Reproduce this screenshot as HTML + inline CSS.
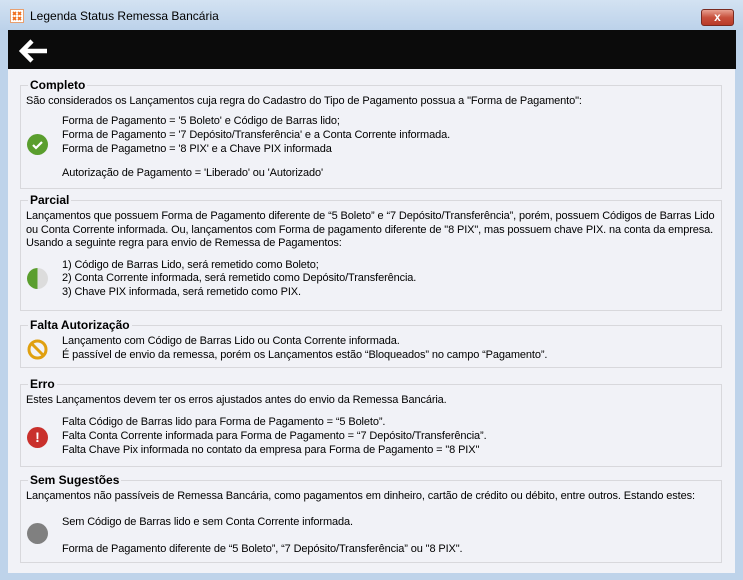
<!DOCTYPE html>
<html><head><meta charset="utf-8"><style>
*{margin:0;padding:0;box-sizing:border-box}
body{width:743px;height:580px;overflow:hidden;background:#bed3ea;font-family:"Liberation Sans",Arial,sans-serif;font-size:11px;color:#000;position:relative}
.t{position:absolute;white-space:nowrap;line-height:14px;font-size:11px;letter-spacing:-0.12px}
.content{position:absolute;left:8px;top:30px;width:727px;height:543px;background:#f1f2f7}
.bar{position:absolute;left:8px;top:30px;width:728px;height:39px;background:#0b0b0b}
.box{position:absolute;left:20px;width:702px;border:1px solid #d8d8dc}
.lg{position:absolute;left:28px;font-weight:bold;background:#f1f2f7;padding:0 2px;line-height:14px;font-size:12px}
.ic{position:absolute;left:27px;width:21px;height:21px;border-radius:50%}
</style></head><body>
<div style="position:absolute;left:0;top:0;width:743px;height:30px;background:linear-gradient(#d3e2f2,#bcd2ea)"></div>
<div style="position:absolute;left:10px;top:9px;width:14px;height:14px;background:#fff;border:1px solid #e8a070"><svg width="12" height="12" viewBox="0 0 12 12"><path d="M2 2l3 3M5 2l-3 3M7 2l3 3M10 2l-3 3M2 7l3 3M5 7l-3 3M7 7l3 3M10 7l-3 3" stroke="#f07020" stroke-width="1.6"/></svg></div>
<div class="t" style="left:30px;top:9px;font-size:12px;letter-spacing:0">Legenda Status Remessa Bancária</div>
<div style="position:absolute;left:701px;top:9px;width:33px;height:17px;border-radius:3px;background:linear-gradient(#e8a090,#c8503c 50%,#b83a28);border:1px solid #7a2a20;color:#fff;font-weight:bold;font-size:12px;text-align:center;line-height:15px">x</div>
<div class="content"></div>
<div class="bar"></div>
<svg style="position:absolute;left:19px;top:39px" width="30" height="24" viewBox="0 0 30 24"><path d="M13 2L3 12l10 10M3 12h25" stroke="#fff" stroke-width="4.5" fill="none"/></svg>

<div class="box" style="top:85px;height:104px"></div>
<div class="lg" style="top:78px">Completo</div>
<div class="t" style="left:26px;top:94px">São considerados os Lançamentos cuja regra do Cadastro do Tipo de Pagamento possua a "Forma de Pagamento":</div>
<div class="t" style="left:62px;top:114px">Forma de Pagamento = '5 Boleto' e Código de Barras lido;</div>
<div class="t" style="left:62px;top:128px">Forma de Pagamento = '7 Depósito/Transferência' e a Conta Corrente informada.</div>
<div class="t" style="left:62px;top:142px">Forma de Pagametno = '8 PIX' e a Chave PIX informada</div>
<div class="t" style="left:62px;top:166px">Autorização de Pagamento = 'Liberado' ou 'Autorizado'</div>
<div class="ic" style="top:134px;background:#5a9e2e"></div>
<svg style="position:absolute;left:27px;top:134px" width="21" height="21"><path d="M6 11l3 3 6-6" stroke="#fff" stroke-width="2.2" fill="none"/></svg>

<div class="box" style="top:200px;height:111px"></div>
<div class="lg" style="top:193px">Parcial</div>
<div class="t" style="left:26px;top:209px">Lançamentos que possuem Forma de Pagamento diferente de “5 Boleto” e “7 Depósito/Transferência”, porém, possuem Códigos de Barras Lido</div>
<div class="t" style="left:26px;top:223px">ou Conta Corrente informada. Ou, lançamentos com Forma de pagamento diferente de "8 PIX", mas possuem chave PIX. na conta da empresa.</div>
<div class="t" style="left:26px;top:236px">Usando a seguinte regra para envio de Remessa de Pagamentos:</div>
<div class="t" style="left:62px;top:258px">1) Código de Barras Lido, será remetido como Boleto;</div>
<div class="t" style="left:62px;top:271px">2) Conta Corrente informada, será remetido como Depósito/Transferência.</div>
<div class="t" style="left:62px;top:285px">3) Chave PIX informada, será remetido como PIX.</div>
<div class="ic" style="top:268px;background:linear-gradient(90deg,#5a9e2e 50%,#dcdcdc 50%)"></div>

<div class="box" style="top:325px;height:43px"></div>
<div class="lg" style="top:318px">Falta Autorização</div>
<div class="t" style="left:62px;top:334px">Lançamento com Código de Barras Lido ou Conta Corrente informada.</div>
<div class="t" style="left:62px;top:348px">É passível de envio da remessa, porém os Lançamentos estão “Bloqueados” no campo “Pagamento”.</div>
<svg style="position:absolute;left:27px;top:339px" width="21" height="21"><circle cx="10.5" cy="10.5" r="8.5" stroke="#e0a010" stroke-width="3" fill="none"/><path d="M5 5l11 11" stroke="#e0a010" stroke-width="3"/></svg>

<div class="box" style="top:384px;height:83px"></div>
<div class="lg" style="top:377px">Erro</div>
<div class="t" style="left:26px;top:393px">Estes Lançamentos devem ter os erros ajustados antes do envio da Remessa Bancária.</div>
<div class="t" style="left:62px;top:415px">Falta Código de Barras lido para Forma de Pagamento = “5 Boleto”.</div>
<div class="t" style="left:62px;top:429px">Falta Conta Corrente informada para Forma de Pagamento = “7 Depósito/Transferência”.</div>
<div class="t" style="left:62px;top:443px">Falta Chave Pix informada no contato da empresa para Forma de Pagamento = "8 PIX"</div>
<div class="ic" style="top:427px;background:#c9302c;color:#fff;text-align:center;font-weight:bold;line-height:21px;font-size:14px">!</div>

<div class="box" style="top:480px;height:83px"></div>
<div class="lg" style="top:473px">Sem Sugestões</div>
<div class="t" style="left:26px;top:489px">Lançamentos não passíveis de Remessa Bancária, como pagamentos em dinheiro, cartão de crédito ou débito, entre outros. Estando estes:</div>
<div class="t" style="left:62px;top:515px">Sem Código de Barras lido e sem Conta Corrente informada.</div>
<div class="t" style="left:62px;top:542px">Forma de Pagamento diferente de “5 Boleto”, “7 Depósito/Transferência” ou "8 PIX".</div>
<div class="ic" style="top:523px;background:#808080"></div>
</body></html>
